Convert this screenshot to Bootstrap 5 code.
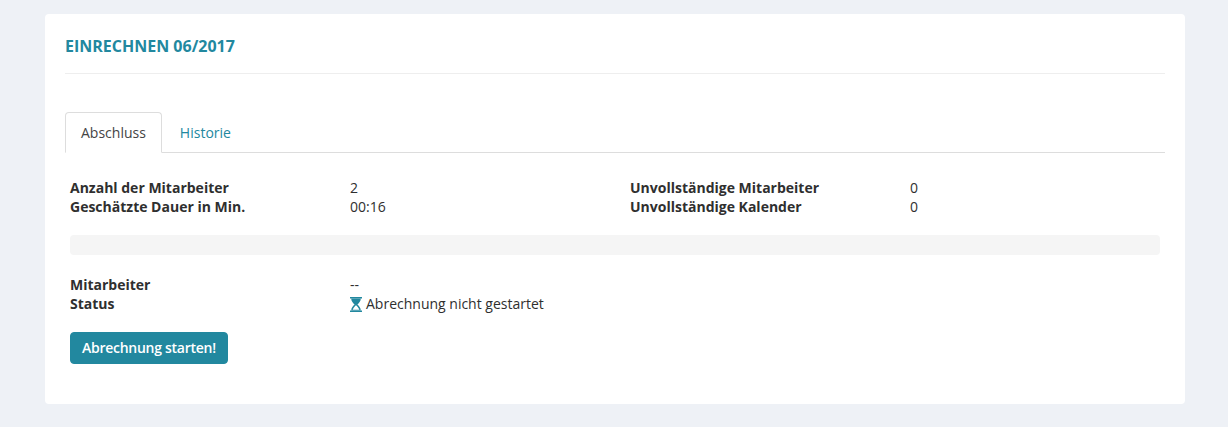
<!DOCTYPE html>
<html lang="de">
<head>
<meta charset="utf-8">
<title>Einrechnen</title>
<link href="https://cdn.jsdelivr.net/npm/bootstrap@5.3.0/dist/css/bootstrap.min.css" rel="stylesheet">
<script src="https://cdn.jsdelivr.net/npm/bootstrap@5.3.0/dist/js/bootstrap.bundle.min.js"></script>
<style>
html, body { height: 427px; overflow: hidden; }
body { background: #eef1f6; font-family: "Open Sans", sans-serif; font-size: 14px; line-height: 19px; color: #2f2f2f; padding: 14px 43px 0 45px; }
.panel-box { background: #fff; border-radius: 4px; height: 390px; padding: 20px; }
.panel-title { color: #22889f; font-size: 16px; font-weight: 700; line-height: 24px; margin: 0; padding-bottom: 15px; border-bottom: 1px solid #eeeeee; text-transform: uppercase; }
.panel-box .nav-tabs { margin-top: 38px; border-bottom-color: #dddddd; }
.panel-box .nav-link { color: #22889f; padding: 10px 15px 9px; line-height: 20px; margin-right: 2px; border-radius: 4px 4px 0 0; }
.panel-box .nav-link.active { color: #444; border-color: #dddddd #dddddd #fff; }
.pane-body { padding: 25px 5px 0; }
.info-grid { display: grid; grid-template-columns: repeat(4, 280px); }
.info-grid dt, .info-grid dd { margin: 0; }
.info-grid dt { font-weight: 700; }
.bar-track { height: 20px; background: #f5f5f5; border-radius: 4px; margin: 19px 0 20px; }
.start-btn { background: #22889f; border-color: #22889f; color: #fff; font-size: 14px; font-weight: 600; line-height: 20px; padding: 5px 11px; border-radius: 4px; margin-top: 19px; letter-spacing: -.27px; }
.start-btn:hover { background: #1d7589; border-color: #1d7589; color: #fff; }
.glass-icon { width: 12px; height: 15px; vertical-align: -3px; margin-right: 4px; }
</style>
</head>
<body>
<div class="panel-box">
  <h1 class="panel-title">Einrechnen 06/2017</h1>
  <ul class="nav nav-tabs">
    <li class="nav-item"><a class="nav-link active" href="#">Abschluss</a></li>
    <li class="nav-item"><a class="nav-link" href="#">Historie</a></li>
  </ul>
  <div class="pane-body">
    <dl class="info-grid m-0">
      <dt>Anzahl der Mitarbeiter</dt><dd>2</dd>
      <dt>Unvollständige Mitarbeiter</dt><dd>0</dd>
      <dt>Geschätzte Dauer in Min.</dt><dd>00:16</dd>
      <dt>Unvollständige Kalender</dt><dd>0</dd>
    </dl>
    <div class="bar-track"></div>
    <dl class="info-grid m-0">
      <dt>Mitarbeiter</dt><dd>--</dd><dt></dt><dd></dd>
      <dt>Status</dt>
      <dd class="text-nowrap"><svg class="glass-icon" viewBox="0 0 12 15" aria-hidden="true"><path fill="#22889f" d="M0 0h12v1.500H0zM0 13.500h12V15H0z"/><path fill="#22889f" d="M1.200 1.500h9.600c0 2.800-2 4.800-3.400 6 1.400 1.200 3.400 3.200 3.400 6H1.200c0-2.800 2-4.800 3.400-6-1.400-1.200-3.400-3.200-3.400-6z"/><path fill="#fff" d="M6 8.300c1 .9 2.900 2.700 3.300 4.500H2.700C3.100 11 5 9.200 6 8.300z"/></svg>Abrechnung nicht gestartet</dd>
    </dl>
    <button type="button" class="btn start-btn">Abrechnung starten!</button>
  </div>
</div>
</body>
</html>
